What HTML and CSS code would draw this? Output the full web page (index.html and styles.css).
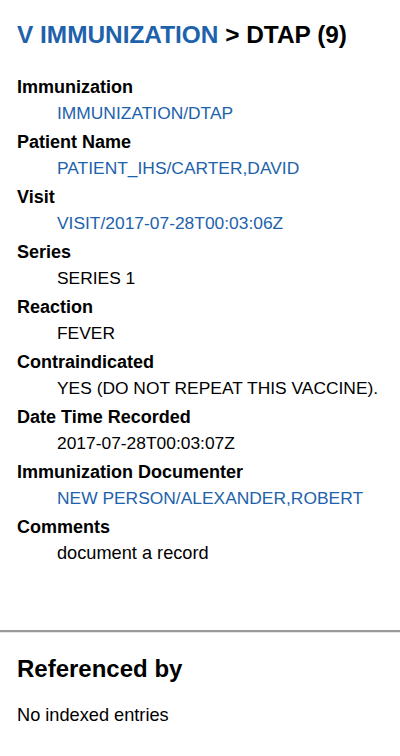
FILE: index.html
```html
<!DOCTYPE html>
<html>
<head>
<meta charset="utf-8">
<link rel="stylesheet" href="styles.css">
</head>
<body>
<main class="record">
  <h1 class="title"><a class="link" href="#">V IMMUNIZATION</a> &gt; DTAP (9)</h1>
  <dl class="fields">
    <dt>Immunization</dt>
    <dd><a class="link" href="#">IMMUNIZATION/DTAP</a></dd>
    <dt>Patient Name</dt>
    <dd><a class="link" href="#">PATIENT_IHS/CARTER,DAVID</a></dd>
    <dt>Visit</dt>
    <dd><a class="link" href="#">VISIT/2017-07-28T00:03:06Z</a></dd>
    <dt>Series</dt>
    <dd>SERIES 1</dd>
    <dt>Reaction</dt>
    <dd>FEVER</dd>
    <dt>Contraindicated</dt>
    <dd>YES (DO NOT REPEAT THIS VACCINE).</dd>
    <dt>Date Time Recorded</dt>
    <dd>2017-07-28T00:03:07Z</dd>
    <dt>Immunization Documenter</dt>
    <dd><a class="link" href="#">NEW PERSON/ALEXANDER,ROBERT</a></dd>
    <dt>Comments</dt>
    <dd class="prose">document a record</dd>
  </dl>
</main>
<section class="refs">
  <h2 class="refs-title">Referenced by</h2>
  <p class="refs-empty prose">No indexed entries</p>
</section>
</body>
</html>
```
FILE: styles.css
```css
html, body {
  margin: 0;
  padding: 0;
  background: #fff;
}
body {
  font-family: "Liberation Sans", Arial, Helvetica, sans-serif;
  color: #000;
  font-size: 17.4px;
}
.link {
  color: #1d62ab;
  text-decoration: none;
}
.prose {
  font-size: 18.2px;
}
.record {
  padding: 21px 17px 0;
  height: 630px;
  box-sizing: border-box;
}
.title {
  margin: 0;
  font-size: 24.4px;
  line-height: 28px;
  font-weight: bold;
}
.fields {
  margin: 26px 0 0;
}
.fields dt {
  font-weight: bold;
  font-size: 18px;
  line-height: 25px;
}
.fields dd {
  margin: 0 0 5px 40px;
  line-height: 25px;
  padding-top: 1px;
  height: 24px;
}
.refs {
  border-top: 2px solid #999;
  box-shadow: inset 0 1px 0 #e6e6e6;
  padding: 23px 17px 0;
}
.refs-title {
  margin: 0;
  font-size: 24px;
  line-height: 28px;
  font-weight: bold;
}
.refs-empty {
  margin: 20px 0 0;
  line-height: 25px;
}
```
